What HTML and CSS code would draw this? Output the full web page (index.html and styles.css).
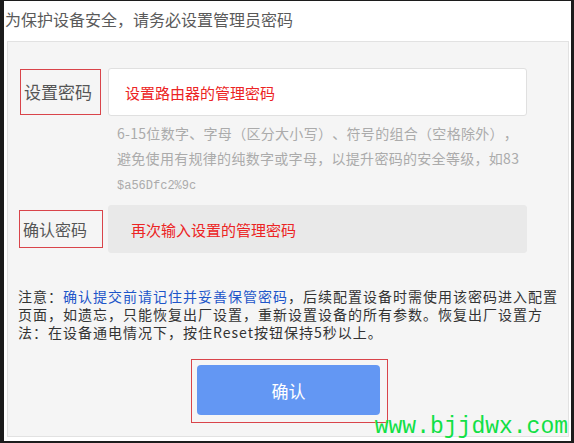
FILE: index.html
```html
<!DOCTYPE html>
<html lang="zh-CN">
<head>
    <meta charset="UTF-8">
    <title>设置管理员密码</title>
    <link rel="stylesheet" href="styles.css">
</head>
<body>
    <div class="frame">
        <div class="title">为保护设备安全，请务必设置管理员密码</div>

        <div class="panel">
            <div class="row">
                <div class="label">设置密码</div>
                <div class="field">设置路由器的管理密码</div>
            </div>

            <div class="hint">
                6-15位数字、字母（区分大小写）、符号的组合（空格除外），<br>
                避免使用有规律的纯数字或字母，以提升密码的安全等级，如83<br>
                <span class="code">$a56Dfc2%9c</span>
            </div>

            <div class="row row-confirm">
                <div class="label label-confirm">确认密码</div>
                <div class="field field-disabled">再次输入设置的管理密码</div>
            </div>

            <p class="notice">注意：<span class="notice-key">确认提交前请记住并妥善保管密码</span>，后续配置设备时需使用该密码进入配置页面，如遗忘，只能恢复出厂设置，重新设置设备的所有参数。恢复出厂设置方法：在设备通电情况下，按住Reset按钮保持5秒以上。</p>

            <div class="button-box">
                <button class="button">确认</button>
            </div>

            <div class="watermark">www.bjjdwx.com</div>
        </div>
    </div>
</body>
</html>
```

FILE: styles.css
```css
body {
    margin: 0;
    background-color: #1c1c1c;
    font-family: "Noto Sans CJK SC", "Liberation Sans", sans-serif;
    text-spacing-trim: space-all;
}

.frame {
    margin: 1px 3px 0 4px;
    height: 440px;
    background-color: #fff;
}

.title {
    height: 40px;
    line-height: 36px;
    padding-left: 1px;
    font-size: 16px;
    color: #5a5a5a;
}

.panel {
    position: relative;
    box-sizing: border-box;
    height: 396px;
    margin: 0 2px 0 3px;
    padding: 26px 0 0 12px;
    background-color: #f5f5f5;
    border: 1px solid #e2e2e2;
}

.row {
    display: flex;
    align-items: center;
}

.label {
    box-sizing: border-box;
    width: 81px;
    height: 46px;
    padding-left: 3px;
    border: 1px solid #d9444a;
    font-size: 17px;
    line-height: 44px;
    color: #555;
}

.field {
    box-sizing: border-box;
    width: 419px;
    height: 48px;
    margin-left: 7px;
    padding-left: 16px;
    background-color: #fff;
    border: 1px solid #e0e0e0;
    border-radius: 3px;
    font-size: 15px;
    line-height: 48px;
    color: #ec2424;
}

.hint {
    margin: 5px 0 0 97px;
    font-size: 14px;
    line-height: 25px;
    letter-spacing: 0.3px;
    color: #ababab;
}

.hint .code {
    font-family: "Liberation Mono", monospace;
    font-size: 12px;
    letter-spacing: 0;
}

.row-confirm {
    margin-top: 6px;
}

.label-confirm {
    width: 84px;
    height: 38px;
    margin-left: -1px;
    font-size: 16px;
    line-height: 36px;
}

.field-disabled {
    margin-left: 5px;
    padding-left: 22px;
    background-color: #e9e9e9;
    border-color: #e9e9e9;
}

.notice {
    margin: 34px 6px 0 -2px;
    font-size: 14px;
    line-height: 18px;
    letter-spacing: 1px;
    color: #333;
}

.notice-key {
    color: #1d55c9;
}

.button-box {
    box-sizing: border-box;
    width: 197px;
    margin: 18px auto 0 171px;
    padding: 5px 7px 7px 5px;
    border: 1px solid #d9444a;
}

.button {
    display: block;
    width: 183px;
    height: 50px;
    border: none;
    border-radius: 4px;
    background-color: #6397f3;
    color: #fff;
    font-family: "Noto Sans CJK SC", sans-serif;
    font-size: 17px;
}

.watermark {
    position: absolute;
    right: 0;
    bottom: -4px;
    font-family: "Liberation Mono", monospace;
    font-size: 23px;
    color: #11e045;
}
```
